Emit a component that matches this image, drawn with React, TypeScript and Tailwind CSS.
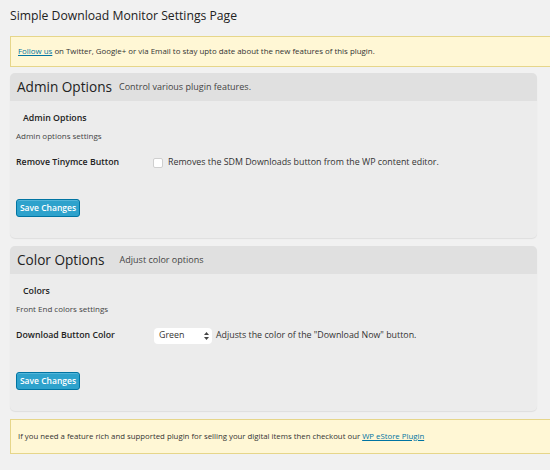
import React from "react";

const font = { fontFamily: '"Open Sans", "Noto Sans", Arial, sans-serif' };

function SaveButton() {
  return (
    <button
      type="button"
      className="mt-[26px] flex h-[18px] w-[64px] items-center justify-center rounded-[3px] border border-[#0074a2] bg-[#2ea2cc] text-[8.5px] font-semibold text-white shadow-[inset_0_1px_0_rgba(120,200,230,0.5)]"
    >
      Save Changes
    </button>
  );
}

function Panel({
  title,
  subtitle,
  gap,
  heading,
  desc,
  label,
  children,
}: {
  title: string;
  subtitle: string;
  gap: string;
  heading: string;
  desc: string;
  label: string;
  children: React.ReactNode;
}) {
  return (
    <div className="mr-[13px] ml-[10px] rounded-[5px] bg-[#ececec] shadow-[0_1px_1px_rgba(0,0,0,0.08)]">
      <div className="flex h-[28px] items-center rounded-t-[5px] bg-[#e0e0e0] pl-[7px]">
        <span className="text-[13.6px] leading-none text-[#222]">{title}</span>
        <span className={`${gap} text-[9px] text-[#444]`}>{subtitle}</span>
      </div>
      <div className="pt-[10px] pb-[21px] pl-[6px]">
        <div className="pl-[7px] text-[8.8px] leading-[14px] font-semibold text-[#222]">{heading}</div>
        <div className="mt-[4.5px] text-[8px] leading-[12px] text-[#444]">{desc}</div>
        <div className="mt-[11.5px] flex h-[20px] items-center">
          <div className="w-[137px] text-[8.75px] font-semibold text-[#222]">{label}</div>
          {children}
        </div>
        <SaveButton />
      </div>
    </div>
  );
}

export default function App() {
  return (
    <div className="min-h-[470px] bg-[#f1f1f1] pb-4" style={font}>
      <h2 className="pt-[6px] pl-[10px] text-[12.2px] leading-[20px] text-[#222]">
        Simple Download Monitor Settings Page
      </h2>

      <div className="mt-[10px] ml-[10px] flex h-[31px] items-center border border-r-0 border-[#e6d68a] bg-[#fff7d5] pl-[7px] text-[7.9px] text-[#333]">
        <span>
          <a className="text-[#0074a2] underline">Follow us</a> on Twitter, Google+ or via Email to stay upto date about
          the new features of this plugin.
        </span>
      </div>

      <div className="mt-[6px]">
        <Panel
          title="Admin Options"
          subtitle="Control various plugin features."
          gap="ml-[7px]"
          heading="Admin Options"
          desc="Admin options settings"
          label="Remove Tinymce Button"
        >
          <span className="h-[10px] w-[10px] rounded-[2px] border border-[#cfcfcf] bg-white" />
          <span className="ml-[5px] text-[8.85px] text-[#333]">
            Removes the SDM Downloads button from the WP content editor.
          </span>
        </Panel>
      </div>

      <div className="mt-[8px]">
        <Panel
          title="Color Options"
          subtitle="Adjust color options"
          gap="ml-[15px]"
          heading="Colors"
          desc="Front End colors settings"
          label="Download Button Color"
        >
          <div className="ml-[1px] flex h-[16px] w-[58px] items-center justify-between rounded-[4px] bg-white pr-[3px] pl-[5px] text-[8.85px] text-[#333]">
            <span>Green</span>
            <svg width="5" height="8" viewBox="0 0 5 8" fill="#444">
              <path d="M2.5 0 L5 3 L0 3 Z" />
              <path d="M0 5 L5 5 L2.5 8 Z" />
            </svg>
          </div>
          <span className="ml-[4px] text-[8.85px] text-[#333]">
            Adjusts the color of the "Download Now" button.
          </span>
        </Panel>
      </div>

      <div className="mt-[8px] ml-[10px] flex h-[35px] items-center border border-r-0 border-[#e6d68a] bg-[#fff7d5] pl-[7px] text-[7.8px] text-[#333]">
        <span>
          If you need a feature rich and supported plugin for selling your digital items then checkout our{" "}
          <a className="text-[#0074a2] underline">WP eStore Plugin</a>
        </span>
      </div>
    </div>
  );
}
